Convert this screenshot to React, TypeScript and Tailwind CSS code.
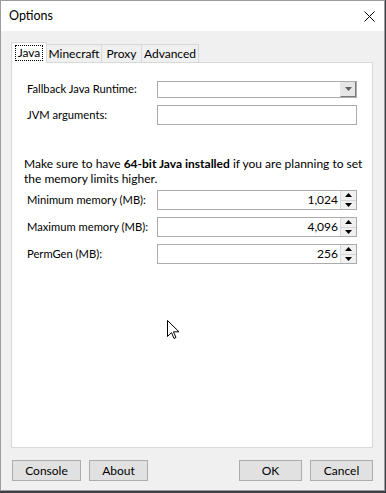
import React from 'react';

const font = "font-['Lato','Liberation_Sans',Arial,sans-serif]";

function Label({ children }: { children: React.ReactNode }) {
  return <div className="w-[130px] shrink-0 whitespace-nowrap text-[11.2px] text-[#000]">{children}</div>;
}

function SpinBox({ value }: { value: string }) {
  return (
    <div className="flex h-[20px] w-[200px] border border-[#ababab] bg-white">
      <div className="flex flex-1 items-center justify-end pr-[2px] text-[12px]">{value}</div>
      <div className="flex w-[16px] flex-col border-l border-[#d9d9d9] bg-[#f0f0f0]">
        <div className="flex flex-1 items-center justify-center border-b border-[#d4d4d4]">
          <svg width="7" height="4" viewBox="0 0 7 4">
            <path d="M3.5 0 L7 4 L0 4 Z" fill="#000" />
          </svg>
        </div>
        <div className="flex flex-1 items-center justify-center">
          <svg width="7" height="4" viewBox="0 0 7 4">
            <path d="M0 0 L7 0 L3.5 4 Z" fill="#000" />
          </svg>
        </div>
      </div>
    </div>
  );
}

function Button({ label, width }: { label: string; width: string }) {
  return (
    <button className={`${width} h-[21px] border border-[#adadad] bg-[#e1e1e1] text-[12px] text-black`}>
      {label}
    </button>
  );
}

export default function App() {
  const tabs = ['Minecraft', 'Proxy', 'Advanced'];
  const tabWidths = ['w-[55px]', 'w-[40px]', 'w-[57px]'];

  return (
    <div className={`min-h-screen bg-[#3b3e44] ${font}`}>
      <div className="relative flex h-[491px] w-[385px] flex-col border border-[#9c9c9c] bg-[#f0f0f0]">
        {/* title bar */}
        <div className="flex h-[30px] items-center justify-between bg-white pl-[8px] pr-[9px]">
          <span className="text-[12.5px] text-black">Options</span>
          <svg width="11" height="11" viewBox="0 0 11 11">
            <path d="M0.5 0.5 L10.5 10.5 M10.5 0.5 L0.5 10.5" stroke="#000" strokeWidth="1" />
          </svg>
        </div>

        <div className="flex flex-1 flex-col pl-[10px] pt-[11px]">
          {/* tabs */}
          <div className="relative z-10 -mb-px flex h-[21px] items-end">
            <div className="flex h-[21px] w-[36px] items-center justify-center border border-b-0 border-[#d9d9d9] bg-white">
              <span className="border border-dotted border-black px-[2px] text-[12px] leading-[14px]">Java</span>
            </div>
            {tabs.map((t, i) => (
              <div
                key={t}
                className={`flex h-[19px] ${tabWidths[i]} items-center justify-center border border-l-0 border-[#d9d9d9] bg-[#f0f0f0] text-[12px]`}
              >
                {t}
              </div>
            ))}
          </div>

          {/* panel */}
          <div className="flex h-[386px] w-[362px] flex-col border border-[#d9d9d9] bg-white pt-[18px]">
            <div className="flex items-center pl-[15px]">
              <Label>Fallback Java Runtime:</Label>
              <div className="flex h-[17px] w-[200px] justify-end border border-[#ababab] bg-white">
                <div className="flex w-[16px] items-center justify-center border-b border-l border-r border-b-[#7a7a7a] border-l-[#e8e8e8] border-r-[#7a7a7a] bg-[#e6e6e6]">
                  <svg width="7" height="4" viewBox="0 0 7 4">
                    <path d="M0 0 L7 0 L3.5 4 Z" fill="#606060" />
                  </svg>
                </div>
              </div>
            </div>
            <div className="mt-[7px] flex items-center pl-[15px]">
              <Label>JVM arguments:</Label>
              <div className="h-[20px] w-[200px] border border-[#ababab] bg-white" />
            </div>

            <div className="mt-[31px] pl-[12px] pr-[4px] text-[12px] leading-[15px] text-black">
              Make sure to have <b>64-bit Java installed</b> if you are planning to set the memory limits higher.
            </div>

            <div className="mt-[4px] flex flex-col gap-[7px] pl-[15px]">
              <div className="flex items-center">
                <Label>Minimum memory (MB):</Label>
                <SpinBox value="1,024" />
              </div>
              <div className="flex items-center">
                <Label>Maximum memory (MB):</Label>
                <SpinBox value="4,096" />
              </div>
              <div className="flex items-center">
                <Label>PermGen (MB):</Label>
                <SpinBox value="256" />
              </div>
            </div>
          </div>

          {/* buttons */}
          <div className="mt-[12px] flex w-[362px] pl-px">
            <Button label="Console" width="w-[69px]" />
            <div className="w-[8px]" />
            <Button label="About" width="w-[59px]" />
            <div className="flex-1" />
            <Button label="OK" width="w-[63px]" />
            <div className="w-[8px]" />
            <Button label="Cancel" width="w-[63px]" />
          </div>
        </div>

        {/* mouse cursor */}
        <svg className="absolute left-[166px] top-[319px]" width="13" height="21" viewBox="0 0 13 21">
          <path
            d="M0.5 0.5 L0.5 16.5 L4.5 12.5 L7 18.5 L9 17.5 L6.5 11.8 L12 11.8 Z"
            fill="#fff"
            stroke="#000"
            strokeWidth="1"
            strokeLinejoin="miter"
          />
        </svg>
      </div>
    </div>
  );
}
